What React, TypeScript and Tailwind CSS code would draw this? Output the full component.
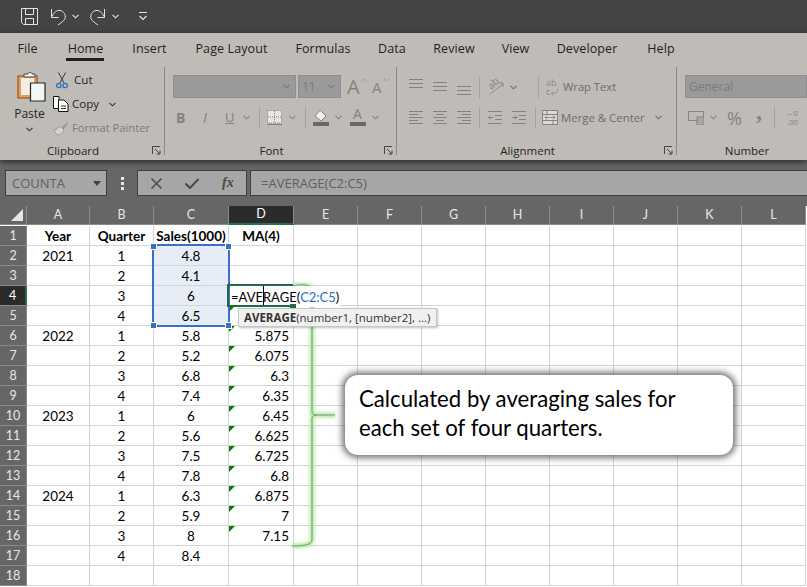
const ui = { fontFamily: '"Open Sans", "Noto Sans", sans-serif' };

const Chev = ({ className = "" }: { className?: string }) => (
  <svg width="7" height="5" viewBox="0 0 7 5" className={className}>
    <path d="M0.5 0.8 L3.5 3.8 L6.5 0.8" fill="none" stroke="currentColor" strokeWidth="1.1" />
  </svg>
);

const Launcher = () => (
  <svg width="9" height="9" viewBox="0 0 9 9" className="text-[#444]">
    <path d="M0.5 8V0.5H8M3 3L8 8M8 4.5V8H4.5" fill="none" stroke="currentColor" strokeWidth="1" />
  </svg>
);

const Sep = () => <div className="w-px h-[21px] bg-[#a5a29e]" />;

const Lines = ({ rows }: { rows: number[][] }) => (
  <svg width="15" height="16" viewBox="0 0 15 16" className="text-[#85827f]">
    {rows.map((r, i) => (
      <path key={i} d={`M${r[0]} ${r[2] + 0.5}H${r[1]}`} stroke="currentColor" strokeWidth="1" />
    ))}
  </svg>
);

const tabs = [
  { label: "File", w: 51 },
  { label: "Home", w: 65, active: true },
  { label: "Insert", w: 63 },
  { label: "Page Layout", w: 101 },
  { label: "Formulas", w: 82 },
  { label: "Data", w: 56 },
  { label: "Review", w: 68 },
  { label: "View", w: 55 },
  { label: "Developer", w: 88 },
  { label: "Help", w: 60 },
];

const TitleBar = () => (
  <div className="h-[33px] bg-[#444444] flex items-center text-[#e4e4e4] pl-[21px] shrink-0">
    <svg width="17" height="17" viewBox="0 0 17 17">
      <path d="M0.5 0.5H16.5V16.5H2.5L0.5 14.5Z M4.5 0.5V6.5H12.5V0.5 M4.5 16.5V10.5H12.5V16.5" fill="none" stroke="currentColor" strokeWidth="1" />
    </svg>
    <svg width="17" height="18" viewBox="0 0 17 18" className="ml-[12px]">
      <path d="M1.5 1V9.5H8.5 M2 8.5C4 4 7 2 10 2.5C14 3.2 16 7 15 10.5C14 13 11 15 8 17" fill="none" stroke="currentColor" strokeWidth="1" />
    </svg>
    <Chev className="ml-[5px]" />
    <svg width="17" height="18" viewBox="0 0 17 18" className="ml-[10px]">
      <path d="M15.5 1V9.5H8.5 M15 8.5C13 4 10 2 7 2.5C3 3.2 1 7 2 10.5C3 13 6 15 9 17" fill="none" stroke="currentColor" strokeWidth="1" />
    </svg>
    <Chev className="ml-[6px]" />
    <svg width="8" height="9" viewBox="0 0 8 9" className="ml-[20px]">
      <path d="M0 0.5H8 M0.5 4L4 7.5L7.5 4" fill="none" stroke="currentColor" strokeWidth="1.2" />
    </svg>
  </div>
);

const TabsRow = () => (
  <div className="h-[29px] flex pl-[2px] text-[12.5px] text-[#1f1f1f] shrink-0 tracking-[0.1px]">
    {tabs.map((t) => (
      <div key={t.label} className="relative flex justify-center pt-[7px]" style={{ width: t.w }}>
        {t.label}
        {t.active && <div className="absolute bottom-[1px] left-[13px] right-[14px] h-[3px] bg-[#1f1f1f]" />}
      </div>
    ))}
  </div>
);

const Group = ({ width, label, children }: { width: number; label: string; children: React.ReactNode }) => (
  <div className="relative flex flex-col h-full border-r border-[#8b8986] shrink-0" style={{ width }}>
    <div className="h-[79px] relative shrink-0">{children}</div>
    <div className="h-[9px] shrink-0 flex items-center justify-center text-[11.5px] text-[#262626] pr-[18px]">{label}</div>
    <div className="absolute right-[3px] bottom-[0px]">
      <Launcher />
    </div>
  </div>
);

const ClipboardGroup = () => (
  <Group width={165} label="Clipboard">
    <div className="flex h-full">
      <div className="w-[56px] flex flex-col items-center pt-[4px] pl-[3px] shrink-0">
        <svg width="29" height="31" viewBox="0 0 29 31" className="ml-[4px]">
          <path d="M1 5H20V27H1Z" fill="#dca265" stroke="#b06a28" strokeWidth="1.6" />
          <path d="M4 7H17V24H4Z" fill="#f4ede2" />
          <path d="M7 6V3H11C11 1 15 1 15 3H18V6Z" fill="#f4f4f4" stroke="#444" strokeWidth="1" />
          <path d="M13.5 12H28V30H13.5Z" fill="#f3f6f6" stroke="#262626" strokeWidth="1.2" />
        </svg>
        <div className="text-[12px] text-[#262626] mt-[4px] leading-4">Paste</div>
        <Chev className="mt-[5px] text-[#333]" />
      </div>
      <div className="flex flex-col text-[11.6px] leading-[24px] text-[#262626]">
        <div className="flex items-center h-[24px] mt-[1px]">
          <svg width="12" height="17" viewBox="0 0 12 17" className="mr-[6px] mt-[1px]">
            <path d="M2.5 0.5L8 11 M9.5 0.5L4 11" fill="none" stroke="#3d3d3d" strokeWidth="1" />
            <circle cx="2.8" cy="13.5" r="2.2" fill="none" stroke="#2f6fc0" strokeWidth="1.3" />
            <circle cx="9.2" cy="13.5" r="2.2" fill="none" stroke="#2f6fc0" strokeWidth="1.3" />
          </svg>
          Cut
        </div>
        <div className="flex items-center h-[24px] -ml-[3px]">
          <svg width="16" height="16" viewBox="0 0 16 16" className="mr-[3px]">
            <path d="M0.5 0.5H6V12.5H0.5Z" fill="#fff" stroke="#111" strokeWidth="1" />
            <path d="M5.5 4H11L15 8V15.5H5.5Z" fill="#fff" stroke="#111" strokeWidth="1" />
            <path d="M8 10H13 M8 12.5H13" stroke="#333" strokeWidth="1" />
          </svg>
          Copy
          <Chev className="ml-[10px] text-[#333]" />
        </div>
        <div className="flex items-center h-[24px] -ml-[3px] text-[#7d7b78] text-[11.2px]">
          <svg width="16" height="16" viewBox="0 0 16 16" className="mr-[3px]">
            <path d="M8 8L15 1.5L14 5L10 10Z" fill="#9c9996" />
            <path d="M1 10C4 10 6 7 7 6L11 10C10 12 8 15 5 15C3 14 1 12 1 10Z" fill="#d6d3d0" stroke="#9c9996" />
          </svg>
          Format Painter
        </div>
      </div>
    </div>
  </Group>
);

const FontGroup = () => (
  <Group width={232} label="Font">
    <div className="flex flex-col h-full pl-[8px]">
      <div className="flex items-center mt-[8px] h-[23px]">
        <div className="w-[123px] h-full bg-[#9a9a9a] border border-[#8f8f8f] flex items-center justify-end pr-[5px] text-[#787878]">
          <Chev />
        </div>
        <div className="w-[43px] ml-[2px] h-full bg-[#9a9a9a] border border-[#8f8f8f] flex items-center justify-between pl-[3px] pr-[5px] text-[12px] text-[#7b7b7b]">
          11
          <Chev />
        </div>
        <div className="ml-[6px] text-[#85827f] text-[20px] leading-none relative w-[22px]">
          A
          <svg width="7" height="5" viewBox="0 0 7 5" className="absolute left-[14px] top-[1px]">
            <path d="M0.5 4L3.5 1L6.5 4" fill="none" stroke="#a09d9a" strokeWidth="1" />
          </svg>
        </div>
        <div className="ml-[3px] text-[#85827f] text-[15px] leading-none relative w-[20px] mt-[2px]">
          A
          <svg width="7" height="5" viewBox="0 0 7 5" className="absolute left-[11px] top-[-3px] text-[#a09d9a]">
            <path d="M0.5 1L3.5 4L6.5 1" fill="none" stroke="currentColor" strokeWidth="1" />
          </svg>
        </div>
      </div>
      <div className="flex items-center mt-[9px] h-[21px] text-[#85827f]">
        <span className="ml-[3px] font-bold text-[14px] w-[24px]">B</span>
        <span className="italic text-[14px] w-[22px] ml-[3px]">I</span>
        <span className="underline text-[13px] w-[18px]">U</span>
        <Chev />
        <div className="ml-[9px]"><Sep /></div>
        <svg width="15" height="15" viewBox="0 0 15 15" className="ml-[7px]">
          <path d="M0.5 0.5H14.5V13H0.5Z" fill="#e8e6e3" stroke="#85827f" strokeDasharray="1 1" />
          <path d="M7.5 1V13 M1 7H14" stroke="#85827f" strokeDasharray="1 1" />
          <path d="M0 14.5H15" stroke="#85827f" />
        </svg>
        <Chev className="ml-[7px]" />
        <div className="ml-[9px]"><Sep /></div>
        <svg width="16" height="17" viewBox="0 0 16 17" className="ml-[7px]">
          <path d="M7 1L13 7L8 12L2 7Z" fill="#efeeec" stroke="#85827f" />
          <rect x="0" y="13" width="16" height="4" fill="#6b6867" />
        </svg>
        <Chev className="ml-[6px]" />
        <div className="relative ml-[8px] w-[16px] h-[17px]">
          <span className="absolute left-[3px] top-[-4px] text-[14px] leading-[17px]">A</span>
          <div className="absolute left-0 bottom-0 w-[16px] h-[4px] bg-[#6b6867]" />
        </div>
        <Chev className="ml-[6px]" />
      </div>
    </div>
  </Group>
);

const tripleWide = (y: number) => [[0, 14, y], [0, 14, y + 4], [0, 14, y + 8]];

const AlignmentGroup = () => (
  <Group width={280} label="Alignment">
    <div className="flex flex-col h-full pl-[12px] text-[11.4px] text-[#6f6d6a]">
      <div className="flex items-center mt-[8px] h-[24px]">
        <div className="w-[24px] h-[16px]"><Lines rows={tripleWide(0)} /></div>
        <div className="w-[24px] h-[16px]"><Lines rows={tripleWide(3)} /></div>
        <div className="w-[22px] h-[16px]"><Lines rows={tripleWide(7)} /></div>
        <Sep />
        <div className="relative ml-[7px] w-[17px] h-[16px] text-[#85827f]">
          <span className="absolute left-0 top-[-2px] -rotate-45 text-[10px] leading-[12px]">ab</span>
          <svg width="17" height="16" viewBox="0 0 17 16" className="absolute left-0 top-0">
            <path d="M3 15L16 5 M12 4H16V8" fill="none" stroke="currentColor" strokeWidth="0.9" />
          </svg>
        </div>
        <Chev className="ml-[6px]" />
        <div className="ml-[21px]"><Sep /></div>
        <div className="ml-[7px] w-[16px] shrink-0 flex flex-col text-[#8d8a87] text-[9px] leading-[9px]">
          <span>ab</span>
          <div className="flex items-center">
            <span>c</span>
            <svg width="9" height="8" viewBox="0 0 9 9">
              <path d="M8 1V3C8 5 6 6 1 6M3 4L1 6L3 8" fill="none" stroke="currentColor" strokeWidth="0.9" />
            </svg>
          </div>
        </div>
        <span className="ml-[1px] text-[11.2px]">Wrap Text</span>
      </div>
      <div className="flex items-center mt-[8px] h-[21px]">
        <div className="w-[24px] h-[16px]"><Lines rows={[[0, 14, 1], [0, 9, 4], [0, 14, 7], [0, 9, 10], [0, 14, 13]]} /></div>
        <div className="w-[24px] h-[16px]"><Lines rows={[[0, 14, 1], [3, 11, 4], [0, 14, 7], [3, 11, 10], [0, 14, 13]]} /></div>
        <div className="w-[22px] h-[16px]"><Lines rows={[[0, 14, 1], [5, 14, 4], [0, 14, 7], [5, 14, 10], [0, 14, 13]]} /></div>
        <Sep />
        <svg width="15" height="14" viewBox="0 0 15 14" className="ml-[8px] text-[#85827f]">
          <path d="M0 0.5H14 M7 4.5H14 M7 8.5H14 M0 12.5H14 M5 6.5H0.5 M2.5 4.5L0.5 6.5L2.5 8.5" fill="none" stroke="currentColor" />
        </svg>
        <svg width="15" height="14" viewBox="0 0 15 14" className="ml-[9px] text-[#85827f]">
          <path d="M0 0.5H14 M7 4.5H14 M7 8.5H14 M0 12.5H14 M0 6.5H5 M3 4.5L5 6.5L3 8.5" fill="none" stroke="currentColor" />
        </svg>
        <div className="ml-[8px]"><Sep /></div>
        <svg width="16" height="15" viewBox="0 0 16 15" className="ml-[6px] text-[#85827f]">
          <path d="M0.5 0.5H15.5V14.5H0.5Z" fill="#dcd9d6" stroke="currentColor" />
          <path d="M0.5 4.5H15.5 M0.5 10.5H15.5 M5 0.5V4.5 M11 10.5V14.5" fill="none" stroke="currentColor" />
          <path d="M3 7.5H13 M5 5.5L3 7.5L5 9.5 M11 5.5L13 7.5L11 9.5" fill="none" stroke="currentColor" strokeWidth="0.9" />
        </svg>
        <span className="ml-[3px]">Merge &amp; Center</span>
        <Chev className="ml-[10px]" />
      </div>
    </div>
  </Group>
);

const NumberGroup = () => (
  <div className="relative flex flex-col h-full flex-1">
    <div className="h-[79px] shrink-0 pl-[8px] flex flex-col text-[#85827f]">
      <div className="mt-[8px] h-[23px] bg-[#9a9a9a] border border-[#8f8f8f] pl-[3px] flex items-center text-[12px] text-[#7b7b7b]">General</div>
      <div className="flex items-center mt-[9px] h-[21px]">
        <svg width="16" height="14" viewBox="0 0 16 14" className="ml-[3px]">
          <path d="M0.5 0.5H15.5V9.5H0.5Z" fill="none" stroke="currentColor" />
          <rect x="9" y="6" width="7" height="8" fill="#a9a7a4" stroke="currentColor" />
        </svg>
        <Chev className="ml-[6px]" />
        <span className="ml-[10px] text-[18px] leading-none">%</span>
        <span className="ml-[14px] w-[8px] text-[24px] font-bold leading-none -mt-[14px]" style={{ fontFamily: '"Liberation Serif", serif' }}>,</span>
        <div className="ml-[10px]"><Sep /></div>
        <div className="ml-[7px] flex flex-col items-end w-[16px] text-[7.5px] leading-[9px] whitespace-nowrap">
          <span>←0</span>
          <span>.00</span>
        </div>
      </div>
    </div>
    <div className="h-[9px] shrink-0 flex items-center justify-center text-[11.5px] text-[#262626] pl-[12px] pr-[2px]">Number</div>
  </div>
);

const Ribbon = () => (
  <div className="relative z-10 h-[127px] bg-[#bfbbb7] shrink-0 flex flex-col shadow-[0_2px_6px_rgba(0,0,0,0.6)]" style={ui}>
    <TabsRow />
    <div className="flex h-[88px] mt-[5px]">
      <ClipboardGroup />
      <FontGroup />
      <AlignmentGroup />
      <NumberGroup />
    </div>
  </div>
);

const FormulaBar = () => (
  <div className="h-[46px] bg-[#666666] flex items-start pt-[10px] pl-[5px] shrink-0 text-[13px] text-[#5f5f5f]" style={ui}>
    <div className="w-[102px] h-[26px] bg-[#a6a6a6] border border-[#3f3f3f] flex items-center justify-between pl-[6px] pr-[5px] pt-[1px]">
      COUNTA
      <svg width="8" height="5" viewBox="0 0 8 5"><path d="M0 0H8L4 5Z" fill="#404040" /></svg>
    </div>
    <div className="w-[30px] h-[26px] flex flex-col items-center justify-center gap-[2px]">
      <div className="w-[3px] h-[3px] bg-[#e8e8e8]" />
      <div className="w-[3px] h-[3px] bg-[#e8e8e8]" />
      <div className="w-[3px] h-[3px] bg-[#e8e8e8]" />
    </div>
    <div className="w-[110px] h-[26px] bg-[#a6a6a6] border border-[#3f3f3f] flex items-center text-[#4a4a4a]">
      <svg width="11" height="11" viewBox="0 0 11 11" className="ml-[13px]">
        <path d="M0.5 0.5L10.5 10.5M10.5 0.5L0.5 10.5" stroke="currentColor" strokeWidth="1.5" />
      </svg>
      <svg width="14" height="11" viewBox="0 0 14 11" className="ml-[23px]">
        <path d="M0.5 5.5L5 10L13.5 1" fill="none" stroke="currentColor" strokeWidth="2" />
      </svg>
      <span className="ml-[23px] italic font-bold text-[14px] leading-none" style={{ fontFamily: '"Liberation Serif", serif' }}>fx</span>
    </div>
    <div className="flex-1 ml-[3px] h-[26px] bg-[#a6a6a6] border-y border-l border-[#3f3f3f] flex items-center pl-[10px] pt-[1px]">=AVERAGE(C2:C5)</div>
  </div>
);

const colLabels = ["A", "B", "C", "D", "E", "F", "G", "H", "I", "J", "K", "L"];

const data: Record<number, string[]> = {
  1: ["Year", "Quarter", "Sales(1000)", "MA(4)"],
  2: ["2021", "1", "4.8", ""],
  3: ["", "2", "4.1", ""],
  4: ["", "3", "6", ""],
  5: ["", "4", "6.5", ""],
  6: ["2022", "1", "5.8", "5.875"],
  7: ["", "2", "5.2", "6.075"],
  8: ["", "3", "6.8", "6.3"],
  9: ["", "4", "7.4", "6.35"],
  10: ["2023", "1", "6", "6.45"],
  11: ["", "2", "5.6", "6.625"],
  12: ["", "3", "7.5", "6.725"],
  13: ["", "4", "7.8", "6.8"],
  14: ["2024", "1", "6.3", "6.875"],
  15: ["", "2", "5.9", "7"],
  16: ["", "3", "8", "7.15"],
  17: ["", "4", "8.4", ""],
  18: ["", "", "", ""],
};

const Handle = ({ className }: { className: string }) => (
  <div className={`absolute w-[5px] h-[5px] bg-[#3a6fc4] border border-white box-content ${className}`} />
);

const Sheet = () => {
  const rows = Object.keys(data).map(Number);
  return (
    <div className="relative flex-1 bg-white overflow-hidden" style={{ fontFamily: 'Lato, "Noto Sans", sans-serif' }}>
      <div className="grid grid-cols-[27px_63px_64px_75px_65px_64px_64px_64px_64px_64px_64px_64px_64px] auto-rows-[20px] text-[13.5px] text-black">
        <div className="bg-[#666666] h-[19px] border-r border-b border-[#8a8a8a] flex items-end justify-end p-[3px]">
          <svg width="12" height="12" viewBox="0 0 12 12"><path d="M12 0V12H0Z" fill="#e6e6e6" /></svg>
        </div>
        {colLabels.map((c) => (
          <div
            key={c}
            className={`h-[19px] flex items-center justify-center text-[12.5px] border-r border-[#8a8a8a] ${
              c === "D" ? "bg-[#2b2b2b] text-white border-b-2 border-b-[#217346]" : "bg-[#666666] text-[#e6e6e6] border-b border-b-[#8a8a8a]"
            }`}
          >
            {c}
          </div>
        ))}
        {rows.map((r) => (
          <RowCells key={r} r={r} />
        ))}
      </div>

      {/* range highlight for the formula */}
      <div className="absolute left-[152px] top-[38px] w-[78px] h-[83px] border-2 border-[#3a6fc4]" />
      <Handle className="left-[150px] top-[37px]" />
      <Handle className="left-[225px] top-[37px]" />
      <Handle className="left-[150px] top-[116px]" />
      <Handle className="left-[225px] top-[116px]" />

      {/* brace */}
      <svg width="60" height="280" viewBox="0 0 60 280" className="absolute left-[285px] top-[76px]">
        <g className="blur-[1.5px]">
          <path d="M7 4C16 2 27 2 27 8V133M27 133H50M27 133V258C27 263 18 264 7 264" fill="none" stroke="#b9eb9e" strokeWidth="5" />
        </g>
        <path d="M7 4C16 2 27 2 27 8V130C27 132 29 133 32 133H50M32 133C29 133 27 134 27 136V258C27 263 18 264 7 264" fill="none" stroke="#6f9a8f" strokeWidth="1" />
      </svg>

      {/* cell being edited */}
      <div className="absolute left-[230px] top-[80px] w-[110px] h-[21px] bg-white flex items-center whitespace-nowrap text-[13px] text-black pl-[1px] pt-[2px]">
        =AVERAGE(<span className="text-[#2f6fc0]">C2:C5</span>)
        <div className="absolute left-[33px] top-0 w-px h-[20px] bg-black" />
      </div>
      <div className="absolute left-[227px] top-[78px] w-[66px] h-[23px] border-2 border-r-0 border-[#1f6b45]" />
      <div className="absolute left-[290px] top-[98px] w-[6px] h-[5px] bg-[#1f6b45]" />
      <div className="absolute left-[238px] top-[102px] w-[199px] h-[19px] bg-[#f0f0f0] border border-[#c6c6c6] flex items-center whitespace-nowrap pl-[5px] text-[11.5px] text-[#333] shadow-[1px_1px_2px_rgba(0,0,0,0.25)]" style={ui}>
        <span className="font-bold">AVERAGE</span>(number1, [number2], ...)
      </div>

      {/* callout */}
      <div className="absolute left-[345px] top-[169px] w-[388px] h-[80px] bg-white rounded-[13px] shadow-[0_0_6px_3px_rgba(60,60,60,0.7)] pl-[14px] pt-[9px] text-[22.2px] leading-[29px] text-black whitespace-nowrap">
        <div>Calculated by averaging sales for</div>
        <div>each set of four quarters.</div>
      </div>
    </div>
  );
};

const RowCells = ({ r }: { r: number }) => {
  const vals = data[r];
  const head = r === 1;
  return (
    <>
      <div
        className={`flex items-center justify-center pt-[1px] text-[12.5px] border-b border-[#8a8a8a] ${
          r === 4 ? "bg-[#2b2b2b] text-white border-r-2 border-r-[#217346]" : "bg-[#666666] text-[#e6e6e6] border-r border-r-[#8a8a8a]"
        }`}
      >
        {r}
      </div>
      {colLabels.map((c, i) => {
        const v = vals[i] ?? "";
        const inRange = c === "C" && r >= 2 && r <= 5;
        const warn = c === "D" && r >= 5 && r <= 16;
        return (
          <div
            key={c}
            className={`relative flex items-center border-r border-b border-[#d4d4d4] px-[3px] pt-[1px] ${
              c === "D" && !head ? "justify-end pr-[4px]" : "justify-center"
            } ${inRange ? "bg-[#e6edf7]" : ""} ${head ? "font-bold" : ""}`}
          >
            {warn && <div className="absolute left-0 top-0 w-0 h-0 border-t-[6px] border-r-[6px] border-t-[#0a7a0a] border-r-transparent" />}
            <span className="whitespace-nowrap">{v}</span>
          </div>
        );
      })}
    </>
  );
};

export default function App() {
  return (
    <div className="w-[807px] h-[587px] overflow-hidden flex flex-col bg-[#666666]">
      <TitleBar />
      <Ribbon />
      <FormulaBar />
      <Sheet />
    </div>
  );
}
